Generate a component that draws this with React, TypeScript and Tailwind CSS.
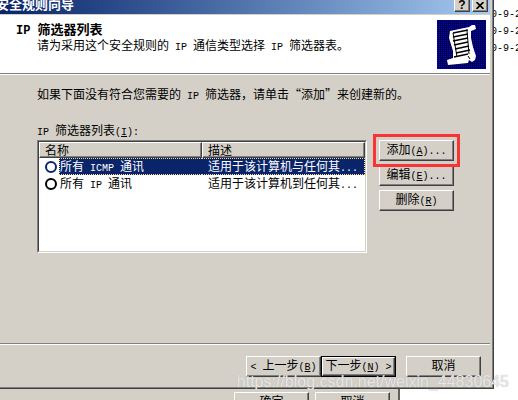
import { type ReactNode } from "react";

function En({ children }: { children: ReactNode }) {
  return (
    <span className="whitespace-pre font-['Liberation_Mono',monospace] text-[10px] leading-none">{children}</span>
  );
}

function Key({ k }: { k: string }) {
  return (
    <En>
      (<span className="underline">{k}</span>)
    </En>
  );
}

function Btn({ children, primary = false }: { children: ReactNode; primary?: boolean }) {
  const bevel =
    "flex h-full w-full items-center justify-center border border-t-white border-l-white border-r-[#404040] border-b-[#404040] pb-[3px] leading-[14px] shadow-[inset_-1px_-1px_0_#808080]";
  return (
    <button
      type="button"
      className={
        primary
          ? "h-[21px] w-[75px] shrink-0 border border-black bg-[#d4d0c8] whitespace-nowrap"
          : "h-[21px] w-[75px] shrink-0 bg-[#d4d0c8] whitespace-nowrap"
      }
    >
      <span className={bevel}>
        <span>{children}</span>
      </span>
    </button>
  );
}

function CaptionButton({ label, children }: { label: string; children: ReactNode }) {
  return (
    <button
      type="button"
      aria-label={label}
      className="flex h-[14px] w-4 items-center justify-center border border-t-white border-l-white border-r-[#404040] border-b-[#404040] bg-[#d4d0c8] shadow-[inset_-1px_-1px_0_#808080]"
    >
      {children}
    </button>
  );
}

function Scroll() {
  return (
    <svg viewBox="0 0 49 49" className="size-[49px] shrink-0" aria-hidden="true">
      <defs>
        <pattern id="dither" width="2" height="2" patternUnits="userSpaceOnUse">
          <rect width="2" height="2" fill="#000058" />
          <rect width="1" height="1" fill="#0000f0" />
          <rect x="1" y="1" width="1" height="1" fill="#000010" />
        </pattern>
      </defs>
      <rect width="49" height="49" fill="url(#dither)" />
      <path
        d="M13 11 L32 7 L35 5 L38 5 L39 9 L34 11 L34 18 L36 27 L39 36 L38 40 L35 42 L32 40 L31 43 L11 45 L10 40 L16 38 L16 31 L12 18 Z"
        fill="#fff"
      />
      <path
        d="M16 13 L31 10 M16 17 L31 14 M16 21 L31 18 M17 25 L31 22 M18 29 L32 26 M19 33 L33 30 M17 37 L31 34"
        stroke="#000"
        strokeWidth="1.7"
        fill="none"
      />
      <path d="M16 13 L20 37 M30 11 L32 34 M31 36 L33 39" stroke="#000" strokeWidth="1" fill="none" />
    </svg>
  );
}

const filters = [
  { name: "ICMP", desc: "适用于该计算机与任何其", selected: true },
  { name: "IP", desc: "适用于该计算机到任何其", selected: false },
];

function FilterTable() {
  const th =
    "border border-t-white border-l-white border-r-[#404040] border-b-[#404040] bg-[#d4d0c8] p-0 pb-px pl-[5px] text-left font-normal leading-[13px] shadow-[inset_-1px_-1px_0_#808080]";
  return (
    <div className="h-[113px] min-w-0 flex-1 border border-t-[#808080] border-l-[#808080] border-r-white border-b-white">
      <div className="h-full border border-t-[#404040] border-l-[#404040] border-r-[#d4d0c8] border-b-[#d4d0c8] bg-white">
        <table aria-labelledby="filters" className="w-full table-fixed border-separate border-spacing-0">
          <thead>
            <tr>
              <th className={th}>名称</th>
              <th className={th}>描述</th>
            </tr>
          </thead>
          <tbody>
            {filters.map((f) => (
              <tr key={f.name} className="align-top">
                <td className="p-0">
                  <label className="flex h-[17px] items-center gap-[2px] pl-[6px]">
                    <input
                      type="radio"
                      name="filter"
                      className={
                        f.selected
                          ? "size-3 shrink-0 appearance-none rounded-full border-2 border-[#0a246a]"
                          : "size-3 shrink-0 appearance-none rounded-full border-2 border-black"
                      }
                    />
                    <span
                      className={
                        f.selected
                          ? "h-[17px] flex-1 border-y border-l border-dotted border-[#fbd98a] bg-[#0a246a] leading-[13px] whitespace-nowrap text-white"
                          : "h-[17px] flex-1 border-y border-l border-transparent leading-[13px] whitespace-nowrap"
                      }
                    >
                      所有<En> {f.name} </En>通讯
                    </span>
                  </label>
                </td>
                <td className="p-0">
                  <div
                    className={
                      f.selected
                        ? "h-[17px] border-y border-r border-dotted border-[#fbd98a] bg-[#0a246a] pl-[6px] leading-[13px] whitespace-nowrap text-white"
                        : "h-[17px] border-y border-transparent pl-[6px] leading-[13px] whitespace-nowrap"
                    }
                  >
                    {f.desc}
                    <En>...</En>
                  </div>
                </td>
              </tr>
            ))}
          </tbody>
        </table>
      </div>
    </div>
  );
}

function Wizard() {
  return (
    <section className="flex h-[389px] min-w-0 flex-1 flex-col border-r border-b border-[#404040] bg-[#d4d0c8]">
      <div className="flex flex-1 flex-col border-r border-b border-[#808080] pr-[2px]">
        <div className="flex h-[14px] items-start justify-between overflow-hidden bg-linear-to-r from-[#0a246a] to-[#a6caf0] pr-[2px]">
          <h1 className="-mt-1 -ml-1 text-[13px] leading-4 font-bold text-white">安全规则向导</h1>
          <div className="-mt-[2px] flex gap-[2px]">
            <CaptionButton label="帮助">
              <span className="font-['Liberation_Sans',sans-serif] text-[12px] leading-3 font-bold">?</span>
            </CaptionButton>
            <CaptionButton label="关闭">
              <svg viewBox="0 0 8 7" className="h-[7px] w-2" aria-hidden="true">
                <path d="M0.5 0 L7.5 7 M7.5 0 L0.5 7" stroke="#000" strokeWidth="1.6" />
              </svg>
            </CaptionButton>
          </div>
        </div>
        <header className="mt-px flex h-[58px] justify-between bg-white pt-[5px] pr-1 pl-4">
          <div className="pt-px">
            <h2 className="text-[13px] leading-[15px] font-bold">
              <span className="font-['Liberation_Mono',monospace] text-[12px] leading-none whitespace-pre">IP </span>
              筛选器列表
            </h2>
            <p className="pl-[21px] leading-[15px]">
              请为采用这个安全规则的<En> IP </En>通信类型选择<En> IP </En>筛选器表。
            </p>
          </div>
          <Scroll />
        </header>
        <div className="border-t border-b border-t-[#808080] border-b-white" />
        <main className="flex-1 pt-[11px] pl-[37px]">
          <p className="leading-4">
            如果下面没有符合您需要的<En> IP </En>筛选器，请单击“添加”来创建新的。
          </p>
          <p id="filters" className="mt-5 leading-4">
            <En>IP </En>筛选器列表<Key k="I" />
            <En>:</En>
          </p>
          <div className="mt-[2px] flex gap-3 pr-9">
            <FilterTable />
            <div className="flex flex-col gap-1">
              <div className="relative flex">
                <Btn>
                  添加<Key k="A" />
                  <En>...</En>
                </Btn>
                <div className="pointer-events-none absolute -inset-[6px] border-3 border-[#fa3434]" />
              </div>
              <Btn>
                编辑<Key k="E" />
                <En>...</En>
              </Btn>
              <Btn>
                删除<Key k="R" />
              </Btn>
            </div>
          </div>
        </main>
        <footer className="border-t border-[#808080] pb-[10px]">
          <div className="flex justify-end border-t border-white pt-[11px] pr-[9px]">
            <Btn>
              <En>&lt; </En>上一步<Key k="B" />
            </Btn>
            <Btn primary>
              下一步<Key k="N" />
              <En> &gt;</En>
            </Btn>
            <div className="ml-[10px] flex">
              <Btn>取消</Btn>
            </div>
          </div>
        </footer>
      </div>
    </section>
  );
}

export default function App() {
  return (
    <div
      lang="zh-CN"
      className="relative flex h-screen flex-col overflow-hidden bg-white font-['Noto_Sans_CJK_SC',sans-serif] text-[12px] text-black"
    >
      <div className="flex">
        <Wizard />
        <div className="-mt-[11px] w-6 overflow-hidden">
          {[0, 1, 2, 3].map((i) => (
            <p key={i} className="-ml-[3px] font-['Liberation_Mono',monospace] text-[10px] leading-[17px] whitespace-nowrap">
              0-9-2
            </p>
          ))}
        </div>
      </div>
      <div className="mr-[118px] flex flex-1 justify-end gap-[6px] overflow-hidden border-r-2 border-[#606060] bg-[#d4d0c8] pt-[3px] pr-2">
        <Btn>确定</Btn>
        <Btn>取消</Btn>
      </div>
      <p className="pointer-events-none absolute right-[9px] bottom-2 font-['Liberation_Sans',sans-serif] text-[16px] leading-5 text-[#f0efed]/90 [text-shadow:0_0_1px_#a8a8a8]">
        https://blog.csdn.net/weixin_44830645
      </p>
    </div>
  );
}
